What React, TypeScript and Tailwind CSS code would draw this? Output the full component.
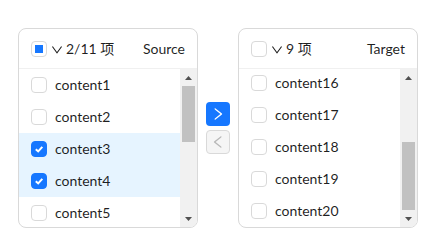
import React from 'react';

const font = { fontFamily: '"Segoe UI", Lato, "Noto Sans CJK SC", sans-serif' };

const Check: React.FC<{ checked?: boolean; half?: boolean }> = ({ checked, half }) => {
  if (checked) {
    return (
      <span className="flex h-4 w-4 shrink-0 items-center justify-center rounded-[4px] border border-[#1677ff] bg-[#1677ff]">
        <svg width="10" height="10" viewBox="0 0 10 10">
          <polyline points="1.8,5.2 4.2,7.4 8.3,2.8" fill="none" stroke="white" strokeWidth="2" />
        </svg>
      </span>
    );
  }
  return (
    <span className="flex h-4 w-4 shrink-0 items-center justify-center rounded-[4px] border border-[#d9d9d9] bg-white">
      {half && <span className="h-2 w-2 bg-[#1677ff]" />}
    </span>
  );
};

const Down = () => (
  <svg width="12" height="12" viewBox="64 64 896 896" fill="rgba(0,0,0,0.88)" className="mt-[2px]">
    <path d="M884 256h-75c-5.1 0-9.9 2.5-12.9 6.6L512 654.2 227.9 262.6c-3-4.1-7.8-6.6-12.9-6.6h-75c-6.5 0-10.3 7.4-6.5 12.7l352.6 486.1c12.8 17.6 39 17.6 51.7 0l352.6-486.1c3.9-5.3.1-12.7-6.4-12.7z" />
  </svg>
);

const Tri: React.FC<{ up?: boolean }> = ({ up }) => (
  <svg width="7" height="4" viewBox="0 0 7 4" fill="#505050">
    {up ? <polygon points="0,4 7,4 3.5,0" /> : <polygon points="0,0 7,0 3.5,4" />}
  </svg>
);

// fake windows scrollbar, thumb placed from data
const Scrollbar: React.FC<{ top: number; size: number }> = ({ top, size }) => (
  <div className="flex w-[17px] shrink-0 flex-col bg-[#f1f1f1]">
    <div className="flex h-[17px] items-center justify-center">
      <Tri up />
    </div>
    <div className="relative flex-1">
      <div className="absolute left-[2px] right-[2px] bg-[#c1c1c1]" style={{ top, height: size }} />
    </div>
    <div className="flex h-[17px] items-center justify-center">
      <Tri />
    </div>
  </div>
);

type Item = { label: string; checked?: boolean };

const Panel: React.FC<{
  half?: boolean;
  count: string;
  title: string;
  items: Item[];
  offset: number;
  thumbTop: number;
  thumbSize: number;
}> = ({ half, count, title, items, offset, thumbTop, thumbSize }) => (
  <div className="flex h-[200px] w-[180px] flex-col overflow-hidden rounded-lg border border-[#d9d9d9] bg-white">
    <div className="flex h-10 shrink-0 items-center border-b border-[#f0f0f0] px-3 text-sm text-[rgba(0,0,0,0.88)]">
      <Check half={half} />
      <span className="ml-1">
        <Down />
      </span>
      <span className="ml-[3px]">{count}</span>
      <span className="flex-1 text-right">{title}</span>
    </div>
    <div className="flex min-h-0 flex-1">
      <div className="flex-1 overflow-hidden">
        <div style={{ marginTop: offset }}>
          {items.map((it) => (
            <div
              key={it.label}
              className={`flex h-8 items-center gap-2 px-3 text-sm text-[rgba(0,0,0,0.88)] ${it.checked ? 'bg-[#e6f4ff]' : ''}`}
            >
              <Check checked={it.checked} />
              <span>{it.label}</span>
            </div>
          ))}
        </div>
      </div>
      <Scrollbar top={thumbTop} size={thumbSize} />
    </div>
  </div>
);

const App: React.FC = () => {
  const left: Item[] = [
    { label: 'content1' },
    { label: 'content2' },
    { label: 'content3', checked: true },
    { label: 'content4', checked: true },
    { label: 'content5' },
  ];
  const right: Item[] = ['content16', 'content17', 'content18', 'content19', 'content20'].map((l) => ({ label: l }));

  return (
    <div className="min-h-[246px] bg-white pl-[18px] pt-[28px]" style={font}>
      <div className="flex items-center">
        <Panel half count="2/11 项" title="Source" items={left} offset={0} thumbTop={0} thumbSize={56} />
        <div className="mx-2 flex flex-col gap-1">
          <button className="flex h-6 w-6 items-center justify-center rounded-[4px] bg-[#1677ff]">
            <svg width="14" height="14" viewBox="64 64 896 896" fill="white">
              <path d="M765.7 486.8L314.9 134.7A7.97 7.97 0 00302 141v77.3c0 4.9 2.3 9.6 6.1 12.6l360 281.1-360 281.1c-3.9 3-6.1 7.7-6.1 12.6V883c0 6.6 7.6 10.3 12.9 6.3l450.8-352.1a31.96 31.96 0 000-50.4z" />
            </svg>
          </button>
          <button className="flex h-6 w-6 items-center justify-center rounded-[4px] border border-[#d9d9d9] bg-[rgba(0,0,0,0.04)]">
            <svg width="14" height="14" viewBox="64 64 896 896" fill="rgba(0,0,0,0.25)">
              <path d="M724 218.3V141c0-6.7-7.7-10.4-12.9-6.3L260.3 486.8a31.86 31.86 0 000 50.3l450.8 352.1c5.3 4.1 12.9.4 12.9-6.3v-77.3c0-4.9-2.3-9.6-6.1-12.6l-360-281 360-281.1c3.8-3 6.1-7.7 6.1-12.6z" />
            </svg>
          </button>
        </div>
        <Panel count="9 项" title="Target" items={right} offset={-2} thumbTop={56} thumbSize={68} />
      </div>
    </div>
  );
};

export default App;
